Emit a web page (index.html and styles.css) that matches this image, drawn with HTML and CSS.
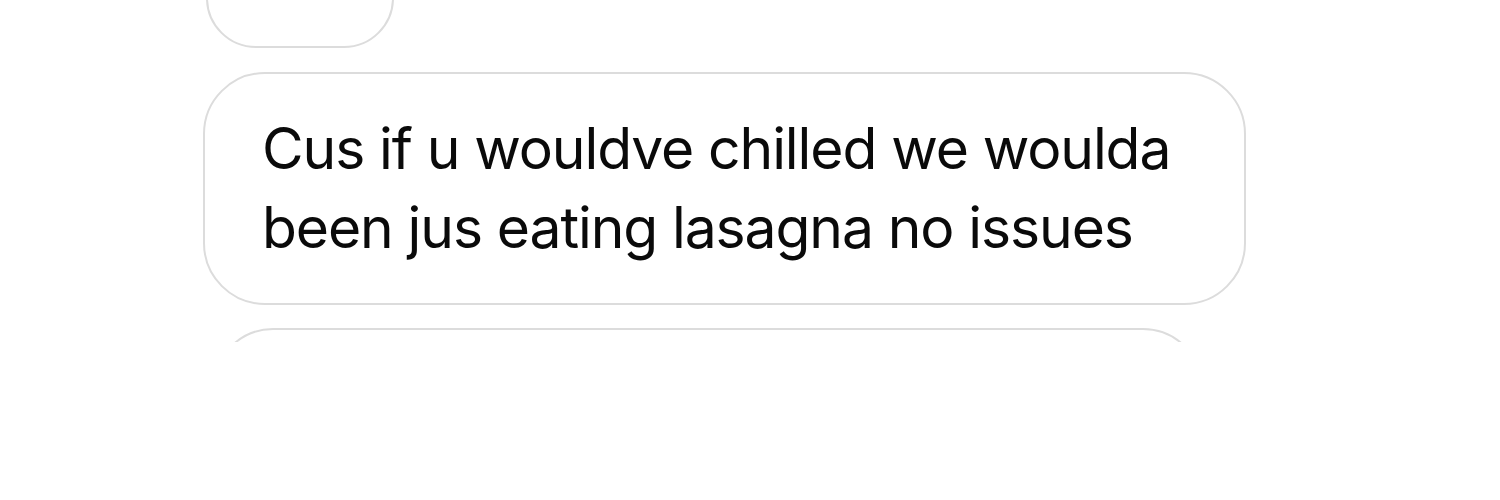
FILE: index.html
```html
<!DOCTYPE html>
<html>
<head>
<meta charset="utf-8">
<link rel="stylesheet" href="styles.css">
</head>
<body>
<div class="viewport">
  <div class="thread">
    <div class="bubble bubble-prev"></div>
    <div class="bubble bubble-main">
      <p class="msg">Cus if u wouldve chilled we woulda<br>been jus eating lasagna no issues</p>
    </div>
    <div class="bubble bubble-next"></div>
  </div>
</div>
</body>
</html>
```
FILE: styles.css
```css
html, body {
  margin: 0;
  padding: 0;
  background: #ffffff;
}
.viewport {
  height: 342px;
  overflow: hidden;
  background: #ffffff;
}
.thread {
  display: flex;
  flex-direction: column;
  align-items: flex-start;
  gap: 24px;
  padding-left: 203px;
  margin-top: -52px;
}
.bubble {
  box-sizing: border-box;
  border: 2.5px solid #dcdcdc;
  border-radius: 62px;
  background: #ffffff;
}
.bubble-prev {
  width: 188px;
  height: 100px;
  margin-left: 3px;
}
.bubble-main {
  width: 1043px;
  height: 233px;
  display: flex;
  align-items: center;
  padding-left: 57px;
  padding-bottom: 2px;
}
.bubble-next {
  width: 990px;
  height: 120px;
  margin-left: 10px;
  margin-top: -1px;
}
.msg {
  margin: 0;
  font-family: Inter, "Noto Sans", sans-serif;
  font-size: 57px;
  line-height: 79px;
  color: #0a0a0a;
  letter-spacing: -1.1px;
}
```
